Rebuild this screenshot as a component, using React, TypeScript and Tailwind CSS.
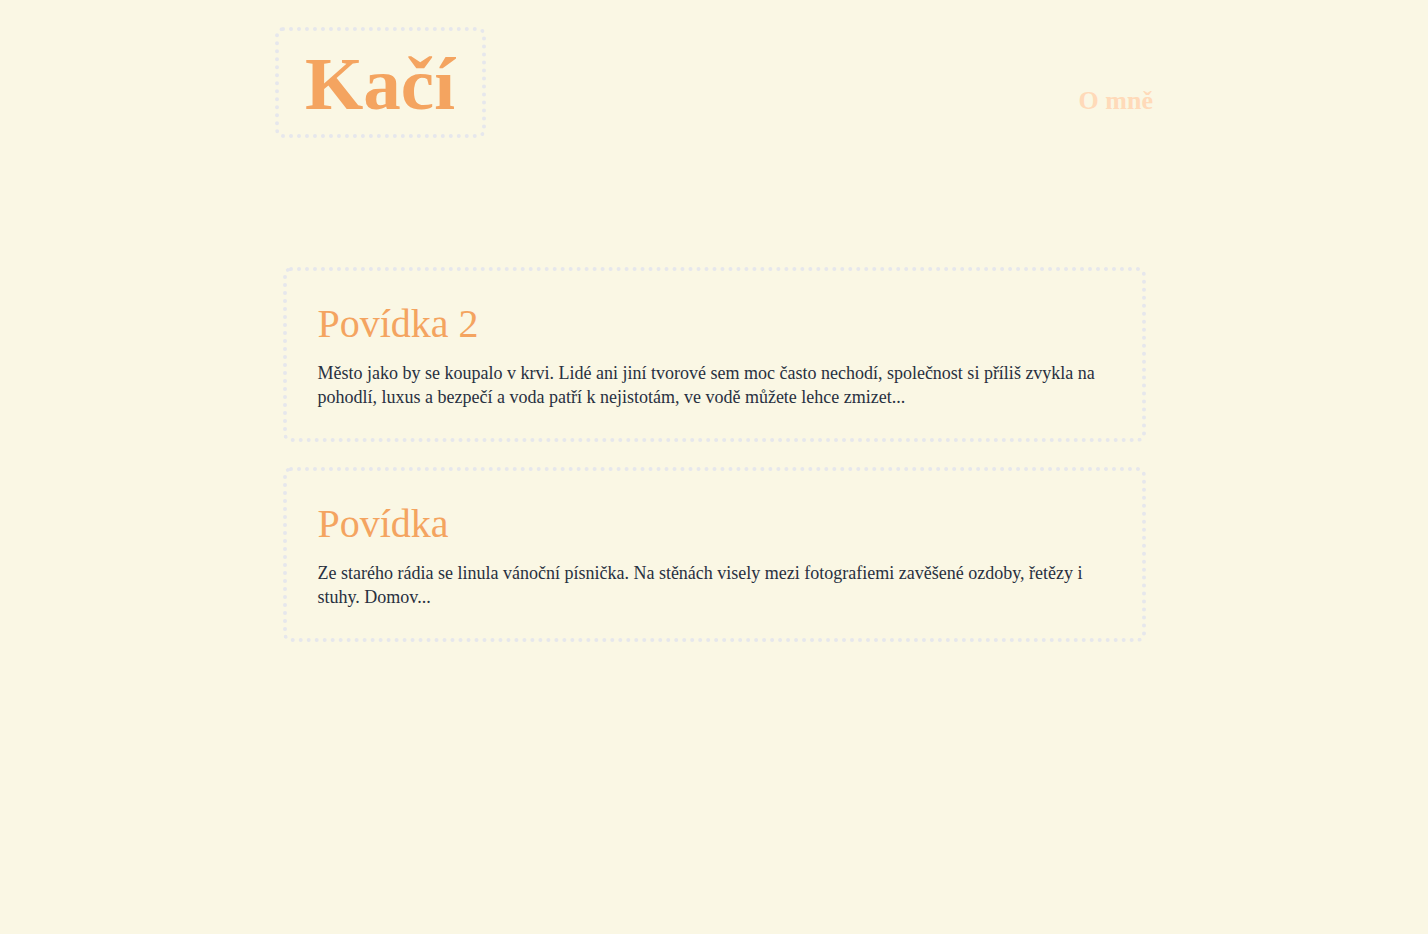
const stories = [
  {
    title: "Povídka 2",
    excerpt:
      "Město jako by se koupalo v krvi. Lidé ani jiní tvorové sem moc často nechodí, společnost si příliš zvykla na pohodlí, luxus a bezpečí a voda patří k nejistotám, ve vodě můžete lehce zmizet...",
  },
  {
    title: "Povídka",
    excerpt:
      "Ze starého rádia se linula vánoční písnička. Na stěnách visely mezi fotografiemi zavěšené ozdoby, řetězy i stuhy. Domov...",
  },
];

const StoryCard = ({ title, excerpt }: { title: string; excerpt: string }) => {
  return (
    <article className="border-4 border-dotted border-[#e6e7ec] rounded-lg px-[31px] pt-[29px] pb-[29px]">
      <h2 className="text-[40px] leading-[48px] text-[#f4a460] mb-[13px]">{title}</h2>
      <p className="text-[18px] leading-6 text-[#283040]">{excerpt}</p>
    </article>
  );
};

export default function App() {
  return (
    <div
      className="min-h-[934px] bg-[#faf7e4]"
      style={{ fontFamily: '"Liberation Serif", "DejaVu Serif", serif' }}
    >
      <header className="max-w-[878px] mx-auto pt-[27px] flex justify-between items-end">
        <a className="block border-4 border-dotted border-[#e6e7ec] rounded-lg pl-[26px] pr-[27px] pt-[15px] pb-[13px] text-[75px] leading-[75px] font-bold text-[#f4a460]">
          Kačí
        </a>
        <nav className="mb-[21px]">
          <a className="text-[26px] leading-8 font-bold text-[#ffdab9]">O mně</a>
        </nav>
      </header>

      <main className="w-[863px] mx-auto mt-[129px] flex flex-col gap-[25px]">
        {stories.map((s) => (
          <StoryCard key={s.title} title={s.title} excerpt={s.excerpt} />
        ))}
      </main>
    </div>
  );
}
